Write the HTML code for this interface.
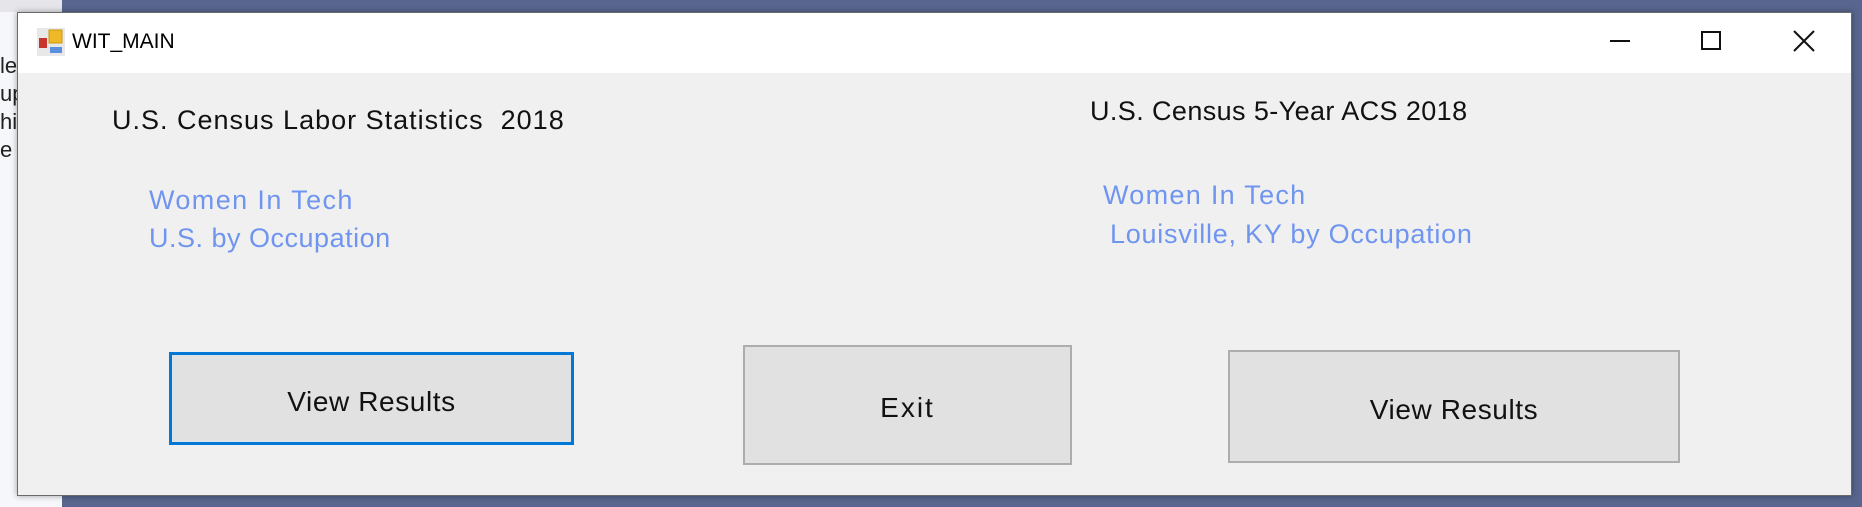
<!DOCTYPE html>
<html><head><meta charset="utf-8"><style>
*{margin:0;padding:0;box-sizing:border-box}
body{width:1862px;height:507px;position:relative;overflow:hidden;background:#58668f;font-family:"Liberation Sans",sans-serif}
.abs{position:absolute;white-space:nowrap}
#leftstrip{left:0;top:0;width:62px;height:507px;background:#f6f7fb}
#topgray{left:0;top:0;width:62px;height:12px;background:#e6e6ea}
#win{left:17px;top:12px;width:1835px;height:484px;background:#f0f0f0;border:1px solid #6a6a6a;box-shadow:0 0 6px rgba(0,0,0,.35)}
#title{left:18px;top:13px;width:1833px;height:60px;background:#fff}
.h{font-size:27px;color:#111;line-height:27px}
.b{font-size:27px;color:#6f95ef;line-height:27px;letter-spacing:0.3px}
.btn{background:#e1e1e1;border:2px solid #adadad}
.bt{font-size:28px;color:#111;line-height:28px;text-align:center;letter-spacing:0.6px}
</style></head><body>
<div class="abs" id="leftstrip"></div>
<div class="abs" id="topgray"></div>
<div class="abs" style="left:0;top:52px;font-size:22px;line-height:28px;color:#222">le<br>up<br>hi<br>e</div>
<div class="abs" id="win"></div>
<div class="abs" id="title"></div>
<svg class="abs" style="left:37px;top:28px" width="28" height="28" viewBox="0 0 28 28">
<rect x="0" y="0" width="28" height="28" fill="#e8e8e8"/>
<rect x="2" y="10" width="8" height="10" fill="#c8352c"/>
<rect x="12" y="2" width="13" height="13" fill="#f0b826" stroke="#c89a10"/>
<rect x="13" y="19" width="12" height="6" fill="#5b8fe0"/>
</svg>
<div class="abs" style="left:72px;top:30px;font-size:21px;color:#000;line-height:24px">WIT_MAIN</div>
<div class="abs" style="left:1610px;top:40px;width:20px;height:2px;background:#111"></div>
<div class="abs" style="left:1701px;top:31px;width:20px;height:19px;border:2px solid #111"></div>
<svg class="abs" style="left:1793px;top:30px" width="22" height="22"><path d="M1 1L21 21M21 1L1 21" stroke="#111" stroke-width="2"/></svg>

<div class="abs h" style="left:112px;top:107px;letter-spacing:1px">U.S. Census Labor Statistics&nbsp; 2018</div>
<div class="abs h" style="left:1090px;top:98px;letter-spacing:0.4px">U.S. Census 5-Year ACS 2018</div>
<div class="abs b" style="left:149px;top:187px;letter-spacing:1.4px">Women In Tech</div>
<div class="abs b" style="left:149px;top:225px;letter-spacing:0.5px">U.S. by Occupation</div>
<div class="abs b" style="left:1103px;top:182px;letter-spacing:1.3px">Women In Tech</div>
<div class="abs b" style="left:1110px;top:221px;letter-spacing:0.75px">Louisville, KY by Occupation</div>

<div class="abs btn" style="left:169px;top:352px;width:405px;height:93px;border:3px solid #0078d7"></div>
<div class="abs bt" style="left:169px;top:388px;width:405px">View Results</div>
<div class="abs btn" style="left:743px;top:345px;width:329px;height:120px"></div>
<div class="abs bt" style="left:743px;top:394px;width:329px;letter-spacing:2px">Exit</div>
<div class="abs btn" style="left:1228px;top:350px;width:452px;height:113px"></div>
<div class="abs bt" style="left:1228px;top:396px;width:452px">View Results</div>
</body></html>
